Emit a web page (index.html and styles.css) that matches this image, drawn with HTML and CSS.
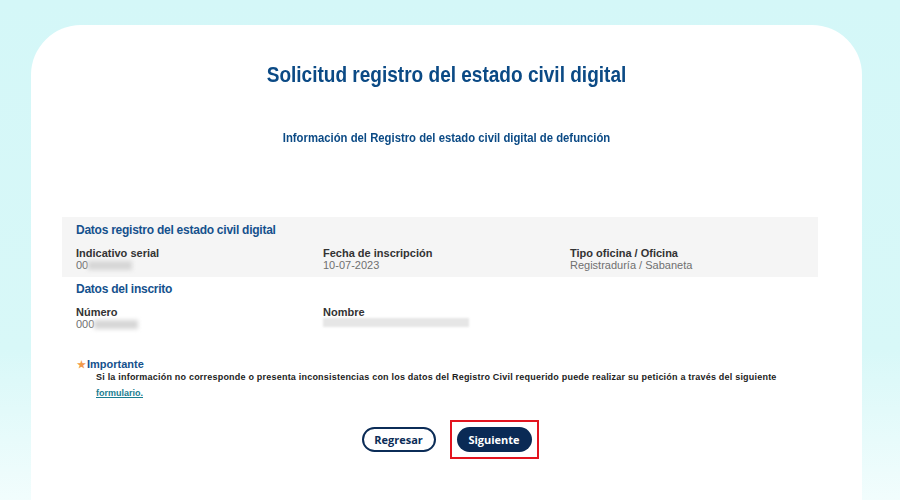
FILE: index.html
```html
<!DOCTYPE html>
<html lang="es">
<head>
  <meta charset="UTF-8">
  <meta name="viewport" content="width=device-width, initial-scale=1.0">
  <title>Solicitud registro del estado civil digital</title>
  <link rel="stylesheet" href="styles.css">
</head>
<body>
  <div class="card">
    <h1 class="title">Solicitud registro del estado civil digital</h1>
    <h2 class="subtitle">Información del Registro del estado civil digital de defunción</h2>

    <!-- Datos del registro -->
    <div class="section grey">
      <h3 class="section-title">Datos registro del estado civil digital</h3>
      <div class="fields">
        <div class="field">
          <span class="label">Indicativo serial</span>
          <span class="value">00<span class="blur"></span></span>
        </div>
        <div class="field">
          <span class="label">Fecha de inscripción</span>
          <span class="value">10-07-2023</span>
        </div>
        <div class="field">
          <span class="label">Tipo oficina / Oficina</span>
          <span class="value">Registraduría / Sabaneta</span>
        </div>
      </div>
    </div>

    <!-- Datos del inscrito -->
    <div class="section">
      <h3 class="section-title">Datos del inscrito</h3>
      <div class="fields">
        <div class="field">
          <span class="label">Número</span>
          <span class="value">000<span class="blur"></span></span>
        </div>
        <div class="field">
          <span class="label">Nombre</span>
          <span class="value"><span class="blur wide"></span></span>
        </div>
      </div>
    </div>

    <div class="notice">
      <div class="notice-head"><span class="star">★</span>Importante</div>
      <p class="notice-text">Si la información no corresponde o presenta inconsistencias con los datos del Registro Civil requerido puede realizar su petición a través del siguiente</p>
      <a class="notice-link" href="#">formulario.</a>
    </div>

    <div class="actions">
      <button class="btn btn-outline">Regresar</button>
      <div class="highlight">
        <button class="btn btn-solid">Siguiente</button>
      </div>
    </div>
  </div>
</body>
</html>
```

FILE: styles.css
```css
html, body {
  margin: 0;
  padding: 0;
}
body {
  width: 900px;
  height: 500px;
  overflow: hidden;
  font-family: "Liberation Sans", Arial, sans-serif;
  background: linear-gradient(#d4f7f8 0%, #d8f8f8 70%, #f2fdfd 100%);
  padding-top: 25px;
  box-sizing: border-box;
}
.card {
  margin-left: 31px;
  width: 831px;
  height: 475px;
  background: #ffffff;
  border-radius: 50px 50px 0 0;
  padding: 37px 44px 0 31px;
  box-sizing: border-box;
}
/* Titulos centrados sobre la tarjeta */
.title {
  margin: 0 -13px 0 0;
  text-align: center;
  font-size: 22px;
  font-weight: bold;
  color: #0b4a85;
  transform: scaleX(0.865);
}
.subtitle {
  margin: 42px -13px 0 0;
  text-align: center;
  font-size: 13px;
  font-weight: bold;
  color: #0b4a85;
  transform: scaleX(0.87);
}
/* Bloques de datos */
.section {
  padding: 5px 14px 4px 14px;
}
.section.grey {
  margin-top: 72px;
  background: #f5f5f5;
  padding-top: 6px;
  padding-bottom: 6px;
}
.section-title {
  margin: 0 0 10px 0;
  font-size: 12px;
  font-weight: bold;
  color: #15518d;
  letter-spacing: -0.25px;
}
.fields {
  display: grid;
  grid-template-columns: 247px 247px 247px;
}
.field {
  display: flex;
  flex-direction: column;
}
.label {
  font-size: 11px;
  font-weight: bold;
  color: #333333;
  line-height: 12px;
}
.value {
  font-size: 11px;
  color: #707070;
  line-height: 12px;
  display: flex;
  align-items: center;
}
.blur {
  display: inline-block;
  width: 44px;
  height: 9px;
  background: #d6d6d6;
  filter: blur(2px);
}
.blur.wide {
  width: 146px;
  background: #e6e6e6;
  filter: blur(1px);
}
/* Aviso importante */
.notice {
  margin: 24px 0 0 15px;
}
.notice-head {
  font-size: 11px;
  font-weight: bold;
  color: #15518d;
}
.star {
  color: #f29a4a;
  font-size: 10px;
  margin-right: 1px;
}
.notice-text {
  margin: 2px 0 0 19px;
  font-size: 9px;
  font-weight: bold;
  color: #1c1c1c;
  letter-spacing: 0.21px;
}
.notice-link {
  display: inline-block;
  margin: 0 0 0 19px;
  font-size: 9px;
  font-weight: bold;
  color: #1a7d91;
}
/* Botones */
.actions {
  display: flex;
  justify-content: center;
  align-items: center;
  gap: 14px;
  margin-top: 20px;
  padding-left: 20px;
}
.btn {
  font-family: "Open Sans", "Liberation Sans", sans-serif;
  font-size: 11px;
  font-weight: bold;
  height: 25px;
  border-radius: 13px;
  padding: 0;
  cursor: pointer;
}
.btn-outline {
  width: 74px;
  background: #ffffff;
  color: #0b2c57;
  border: 2px solid #0b2c57;
}
.btn-solid {
  width: 75px;
  background: #0a2a55;
  color: #ffffff;
  border: none;
}
.highlight {
  border: 2px solid #e3141f;
  padding: 5px 5px;
  display: flex;
}
```
